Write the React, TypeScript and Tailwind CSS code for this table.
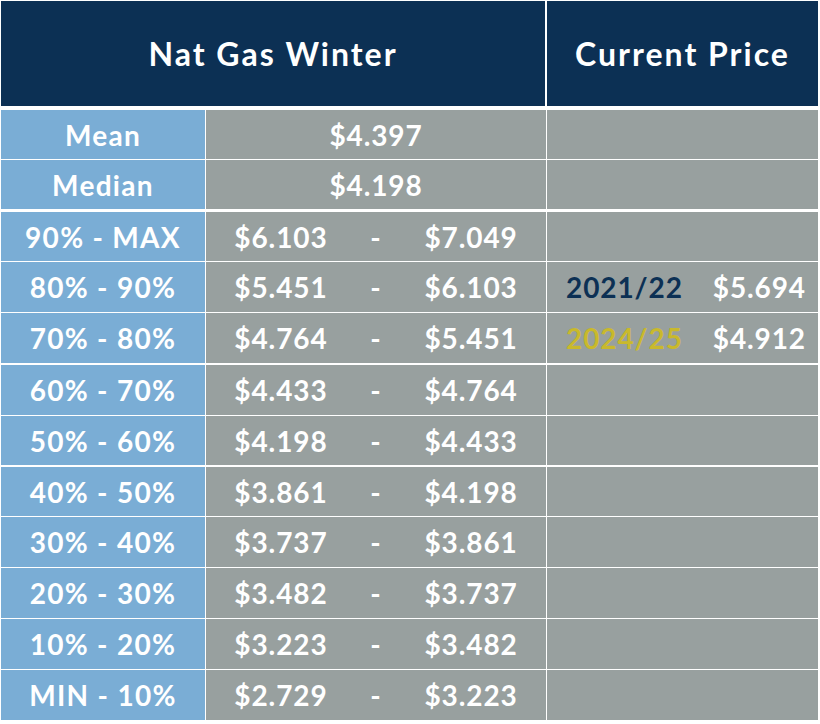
import React from "react";

const ranges: [string, string, string][] = [
  ["90% - MAX", "$6.103", "$7.049"],
  ["80% - 90%", "$5.451", "$6.103"],
  ["70% - 80%", "$4.764", "$5.451"],
  ["60% - 70%", "$4.433", "$4.764"],
  ["50% - 60%", "$4.198", "$4.433"],
  ["40% - 50%", "$3.861", "$4.198"],
  ["30% - 40%", "$3.737", "$3.861"],
  ["20% - 30%", "$3.482", "$3.737"],
  ["10% - 20%", "$3.223", "$3.482"],
  ["MIN - 10%", "$2.729", "$3.223"],
];

// line above each range row, and row height
const gaps = ["mt-[3px]", "mt-px", "mt-px", "mt-[2px]", "mt-px", "mt-[2px]", "mt-px", "mt-px", "mt-px", "mt-px"];
const heights = ["h-[49px]", "h-[50px]", "h-[50px]", "h-[50px]", "h-[49px]", "h-[49px]", "h-[50px]", "h-[50px]", "h-[50px]", "h-[50px]"];

const current: Record<number, { year: string; price: string; color: string }> = {
  1: { year: "2021/22", price: "$5.694", color: "text-[#0c3054]" },
  2: { year: "2024/25", price: "$4.912", color: "text-[#c9b92c]" },
};

function Row({ label, children, right, className = "" }: { label: string; children: React.ReactNode; right?: React.ReactNode; className?: string }) {
  return (
    <div className={`flex gap-px ${className}`}>
      <div className="w-[204px] bg-[#7aadd5] flex items-center justify-center tracking-[1.3px]">{label}</div>
      <div className="w-[340px] bg-[#98a09f] flex items-center justify-center">{children}</div>
      <div className="w-[271px] bg-[#98a09f] flex items-center">{right}</div>
    </div>
  );
}

export default function App() {
  return (
    <div className="w-[820px] h-[724px] bg-white pt-px pl-px text-white text-[28px] font-bold tracking-[0.9px]" style={{ fontFamily: "Lato, 'Open Sans', sans-serif" }}>
      <div className="flex h-[105px] gap-[2px] text-[32px] tracking-[2px]">
        <div className="w-[544px] bg-[#0c3054] flex items-center justify-center">Nat Gas Winter</div>
        <div className="w-[271px] bg-[#0c3054] flex items-center justify-center">Current Price</div>
      </div>
      <Row label="Mean" className="mt-[4px] h-[49px]">$4.397</Row>
      <Row label="Median" className="mt-px h-[49px]">$4.198</Row>
      {ranges.map(([label, lo, hi], i) => (
        <Row
          key={label}
          label={label}
          className={`${gaps[i]} ${heights[i]}`}
          right={
            current[i] ? (
              <div className="flex w-full items-center justify-between pl-[19px] pr-[12px]">
                <span className={current[i].color}>{current[i].year}</span>
                <span>{current[i].price}</span>
              </div>
            ) : null
          }
        >
          <div className="flex items-center gap-[40px]">
            <span className="w-[96px] text-left">{lo}</span>
            <span>-</span>
            <span className="w-[96px] text-right">{hi}</span>
          </div>
        </Row>
      ))}
    </div>
  );
}
